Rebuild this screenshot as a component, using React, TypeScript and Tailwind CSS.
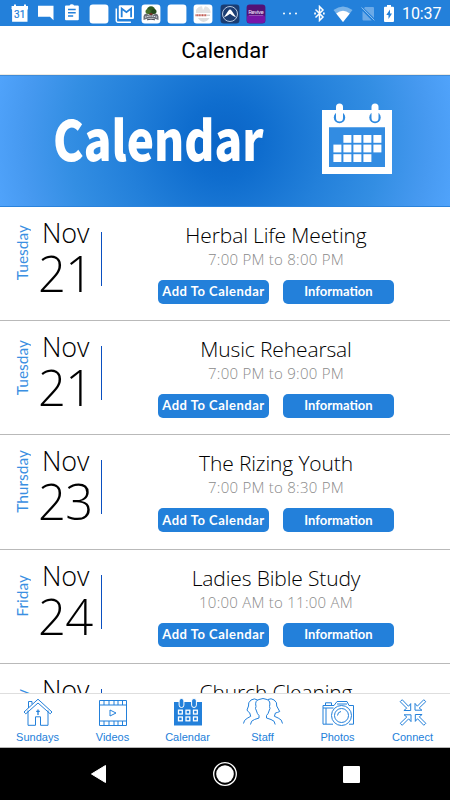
import type { ReactNode } from "react";

const BLUE = "#2380da";

const events = [
  { day: "Tuesday", month: "Nov", date: "21", title: "Herbal Life Meeting", time: "7:00 PM to 8:00 PM" },
  { day: "Tuesday", month: "Nov", date: "21", title: "Music Rehearsal", time: "7:00 PM to 9:00 PM" },
  { day: "Thursday", month: "Nov", date: "23", title: "The Rizing Youth", time: "7:00 PM to 8:30 PM" },
  { day: "Friday", month: "Nov", date: "24", title: "Ladies Bible Study", time: "10:00 AM to 11:00 AM" },
  { day: "Friday", month: "Nov", date: "24", title: "Church Cleaning", time: "" },
];

function StatusIcon({ children }: { children?: ReactNode }) {
  return (
    <svg className="w-5 h-5 shrink-0" viewBox="0 0 20 20" fill="none">
      {children}
    </svg>
  );
}

function Tile({ fill = "#fff", children }: { fill?: string; children?: ReactNode }) {
  return (
    <StatusIcon>
      <rect x="0.6" y="0.6" width="18.8" height="18.8" rx="3.2" fill={fill} />
      {children}
    </StatusIcon>
  );
}

function StatusBar() {
  return (
    <div className="h-[26px] shrink-0 bg-[#2380da] flex items-center pl-[10px] pr-[8px] pb-px">
      <div className="flex gap-[6.2px] pt-[2px]">
        <StatusIcon>
          <path d="M2 2h2V0.6h2V2h8V0.6h2V2h2v3H1.6V2z" fill="#fff" />
          <path d="M1.400 4.500h16.800l-.7 1.500v11.800h-15.400V6z" fill="#fff" />
          <text x="9.700" y="14" textAnchor="middle" fontSize="10" stroke={BLUE} strokeWidth=".2" fill={BLUE} className="font-[Roboto]">31</text>
        </StatusIcon>
        <StatusIcon>
          <path d="M2 1.700h15.500v14.500l-3.500-3.500H2z" fill="#fff" />
        </StatusIcon>
        <StatusIcon>
          <path d="M4 1.500h3.500a2.500 2 0 0 1 4.600 0h3.700q1 0 1 1v12.700q0 1-1 1H4q-1 0-1-1V2.500q0-1 1-1z" fill="#fff" />
          <path d="M6 5.500h7.700M6 8.700h7.700M6 11.900h5.200" stroke={BLUE} strokeWidth="1.500" />
        </StatusIcon>
        <Tile />
        <StatusIcon>
          <path d="M1.300 4.500v12.300q0 1.400 1.400 1.400h13.200" stroke="#fff" strokeWidth="1.500" />
          <rect x="3.800" y="1.200" width="15.200" height="13.800" rx="1.300" fill="#fff" />
          <path d="M6.700 13.300V4.500L11.400 8.200 16.100 4.500v8.800" stroke={BLUE} strokeWidth="1.800" />
        </StatusIcon>
        <Tile>
          <circle cx="10" cy="6.500" r="4.200" fill="#315b22" />
          <circle cx="7" cy="7.500" r="2.500" fill="#46702c" />
          <circle cx="13" cy="7.500" r="2.500" fill="#24491c" />
          <path d="M8.500 9h3v3h-3z" fill="#6b3429" />
          <path d="M2.500 12.500Q3 9 6 10l4 1.500 4-1.500q3-1 3.500 2.500v3.500l-3-1q-4.500-1.500-9 0l-3 1z" fill="#6b7079" />
          <path d="M4 13.200q6-2.400 12 0" stroke="#dfe3ea" strokeWidth="1.100" strokeDasharray="1.500 .7" />
          <path d="M6 15.800q4-1.200 8 0" stroke="#3f4550" strokeWidth="1" />
        </Tile>
        <Tile />
        <Tile>
          <path d="M3 6Q5 2.500 9 2.200l1 4 2-4Q16 3 17.500 7v2H3z" fill="#e3e3e3" />
          <path d="M5 14h11.500q-2 3.500-6 4-3.500-.5-5.500-4z" fill="#dcdcdc" />
          <path d="M2.500 11.200h11" stroke="#c0584f" strokeWidth="2" strokeDasharray="1.200 .4" />
          <path d="M13.500 11.200h3.500" stroke="#bbb" strokeWidth="1" />
        </Tile>
        <Tile fill="#1b3d72">
          <circle cx="10" cy="10" r="7.500" stroke="#b9c9df" strokeWidth="1" />
          <path d="M3.800 13.500 8.500 6.500l1.500-1.300 1.500 1.300 4.700 7-3.400-1.800L10 9.800l-2.800 1.900z" fill="#fff" />
        </Tile>
        <Tile fill="#521276">
          <rect x="1" y="11" width="18" height="8" rx="2" fill="#7815a8" />
          <text x="10" y="10.300" textAnchor="middle" fontSize="6" fill="#f3e5fa" textLength="15.500" className="font-[Roboto]">Revive</text>
          <path d="M3 11.500h14" stroke="#a277bb" strokeWidth=".6" />
        </Tile>
      </div>
      <svg className="w-4 h-1 ml-[16px]" viewBox="0 0 16 4" fill="#fff">
        <circle cx="2" cy="2.400" r="1" />
        <circle cx="8" cy="2.400" r="1" />
        <circle cx="14" cy="2.400" r="1" />
      </svg>
      <div className="flex items-center ml-auto pt-[2px]">
        <svg className="w-[11px] h-[17px] mr-[8px]" viewBox="0 0 11 17" fill="none" stroke="#fff" strokeWidth="1.500">
          <path d="M1.500 4.500 9 12l-3.500 3.500v-14L9 5 1.500 12.500" />
          <path d="M0.200 8.500h1.700M9 8.500h1.700" strokeWidth="1.800" />
        </svg>
        <svg className="w-5 h-4 mr-[8px]" viewBox="0 0 20 16">
          <path d="M0.500 4Q10-3 19.500 4L10 16z" fill="#79b3e9" />
          <path d="M3.200 7.400Q10 2.300 16.800 7.400L10 16z" fill="#fff" />
        </svg>
        <svg className="w-[14px] h-[15px] mr-[9px]" viewBox="0 0 14 15">
          <path d="M4 1h8q1 0 1 1v10L3 2.200zM1.500 5 10.800 14.500H2.500q-1 0-1-1z" fill="#6caae7" />
          <path d="M.6 1.500 13.400 14.400" stroke="#8fc0ee" strokeWidth="1" />
        </svg>
        <svg className="w-[10px] h-[17px] mr-[8px]" viewBox="0 0 10 17">
          <path d="M3 0h4v1.800h2q1 0 1 1V16q0 1-1 1H1q-1 0-1-1V2.800q0-1 1-1h2z" fill="#fff" />
          <path d="M6 4.500 2.300 10h2.200v4L8 8.500H6z" fill={BLUE} />
        </svg>
        <span className="font-[Roboto] text-[16px] leading-5 tracking-[-0.1px] text-white w-[40px] pt-px">10:37</span>
      </div>
    </div>
  );
}

function Banner() {
  const cells = [
    [1, 2, 3, 4],
    [0, 1, 2, 3, 4],
    [0, 1, 2, 3],
  ];
  return (
    <div className="h-[132px] shrink-0 flex items-center border-t border-b border-t-[#3f8bd8] border-b-[#2a83dd] bg-[radial-gradient(circle_240px_at_50%_50%,#0a64c6_0%,#0f6dce_16%,#2380da_42%,#338ee3_65%,#4699f0_84%,#52a5fd_100%)]">
      <h2 className="ml-[53px] w-[213px] pb-[9px] origin-left scale-x-[0.835] whitespace-nowrap text-white font-black text-[55px] leading-[60px] font-['Noto_Sans_CJK_SC','Open_Sans',sans-serif]">
        Calendar
      </h2>
      <svg className="w-[72px] h-[72px] ml-[55px] mb-[7px]" viewBox="0 0 72 72">
        <path d="M1 8h70v64H1z" fill="#fff" />
        <path d="M8 25.300h56v39.700H8z" fill="#328ce2" />
        {[18.5, 54].map((x) => (
          <g key={x}>
            <circle cx={x} cy="15.500" r="5.700" fill="#2e8ae0" />
            <rect x={x - 3.5} y="1.500" width="7" height="18" rx="3.500" fill="#fff" />
          </g>
        ))}
        {cells.map((row, r) =>
          row.map((c) => <rect key={`${r}-${c}`} x={12.4 + c * 10} y={33 + r * 9.6} width="8" height="7.800" fill="#fff" />)
        )}
      </svg>
    </div>
  );
}

function EventRow({ event }: { event: (typeof events)[number] }) {
  return (
    <div className="h-[114.2px] shrink-0 flex border-b border-[#b9b9b9]">
      <div className="w-[23px] ml-[11px] h-[92px] flex items-center justify-center">
        <span className="[writing-mode:vertical-rl] rotate-180 text-[15.5px] leading-[23px] text-[#3a8fe2] font-[Lato]">
          {event.day}
        </span>
      </div>
      <div className="w-[62px] ml-[5px] pt-[8px] font-light text-black font-['Open_Sans']">
        <div className="text-[27px] leading-[36px] pl-[3px] tracking-[-0.1px]">{event.month}</div>
        <div className="text-[49px] leading-[44px] -ml-px tracking-[-0.6px]">{event.date}</div>
      </div>
      <div className="w-px h-[54px] mt-[25px] bg-[#0a4fc0]" />
      <div className="w-[348px] pl-[56px] pr-[56px] pt-[13px] text-center">
        <h3 className="text-[21px] leading-[30px] tracking-[-0.13px] font-light text-black font-['Open_Sans'] whitespace-nowrap">{event.title}</h3>
        <p className="h-[18px] text-[15px] leading-[18px] tracking-[0.25px] font-light text-[#8a8a8a] font-['Open_Sans'] whitespace-nowrap">{event.time}</p>
        <div className="flex gap-[14px] mt-[12px]">
          <button className="w-[111px] h-[24px] shrink-0 rounded-[5px] bg-[#2380da] text-white font-bold text-[13px] tracking-[0.5px] font-[Lato] whitespace-nowrap">Add To Calendar</button>
          <button className="w-[111px] h-[24px] shrink-0 rounded-[5px] bg-[#2380da] text-white font-bold text-[13px] font-[Lato]">Information</button>
        </div>
      </div>
    </div>
  );
}

const tabs: { label: string; icon: ReactNode }[] = [
  {
    label: "Sundays",
    icon: (
      <>
        <path d="M7 12.500v14.800h7.500v-8.500h5v8.500h7.500V12.500" />
        <path d="M3 14 17 1.200 31 14l-1.800 1.800L17 5 4.800 15.800z" />
        <path d="M7.500 10V3.500h3.500v2.800" />
        <path d="M17 11.500v5.500M15.200 13.300h3.600" strokeWidth="1.300" />
      </>
    ),
  },
  {
    label: "Videos",
    icon: (
      <>
        <path d="M3.500 2.500h27v25h-27zM3.500 7h27M3.500 23h27M8 2.500V7M13 2.500V7M18 2.500V7M22 2.500V7M26.500 2.500V7M8 23v4.500M13 23v4.500M18 23v4.500M22 23v4.500M26.500 23v4.500" />
        <path d="M14 12v6l6-3z" />
      </>
    ),
  },
  {
    label: "Calendar",
    icon: (
      <>
        <path d="M3 4h28v23.500H3z" fill={BLUE} stroke="none" />
        {[10.5, 23].map((x) => (
          <rect key={x} x={x - 2.4} y=".5" width="4.800" height="9" rx="2.400" fill={BLUE} stroke="#fff" />
        ))}
        {[12.2, 19].map((y) =>
          [7.5, 15, 22.5].map((x) => <rect key={`${x}-${y}`} x={x} y={y} width="3.800" height="3.800" stroke="#fff" strokeWidth="1.300" />)
        )}
      </>
    ),
  },
  {
    label: "Staff",
    icon: (
      <>
        <path d="M23.500 8.500q1.300 1.500-.5 4.500-.7 3-2.500 4.500v2.500l4.500 1.500q4 1 4.200 5" />
        <path d="M10 8.500q-1.300 1.500.5 4.500.7 3 2.500 4.500v2.500l-4.500 1.500Q4.700 22.500 4.500 26.500" />
        <path d="M10 8.500Q8.500 2.500 13 1.500q4-2 8 0 4 1.500 2.500 7" />
        <path d="M11.500 2Q8.500-.2 5 2 1.800 4.500 2.500 8L1 12q1 2 2.700 2.800l1 3.500-3.500 2Q-2.200 22-2.500 25.500" />
        <path d="M22 1.500q3-1.700 6.200.5Q31.500 4.500 30.700 8l3 5.500q-2 1-4.300 1.500l-1 3.300 3.800 1.700q4 1.500 4.300 5.500" />
      </>
    ),
  },
  {
    label: "Photos",
    icon: (
      <>
        <path d="M12 26.200H2V7.500h11l3-4h10l2 4h4.500v18.700H28M4.500 7.500V4.800h6v2.700M2 10h10.500M5 10v16M16 6h10" />
        <circle cx="20.500" cy="17.500" r="10" fill="#fff" />
        <circle cx="20.500" cy="17.500" r="7" />
        <path d="M16.500 17.500q.2-3.500 3.500-4" />
      </>
    ),
  },
  {
    label: "Connect",
    icon: (
      <>
        {[0, 90, 180, 270].map((a) => (
          <path key={a} transform={`rotate(${a} 17 14.500)`} d="M6.200 1.700 4.200 3.700l6.500 6.500-2.800 2.300h6.800V5.600L12.500 8.300z" />
        ))}
      </>
    ),
  },
];

function TabBar() {
  return (
    <nav className="h-[55px] shrink-0 flex bg-white border-t border-t-[#dedede] border-b border-b-[#b5b5b5]">
      {tabs.map((tab) => (
        <div key={tab.label} className="flex-1 flex flex-col items-center pt-[4px]">
          <svg className="w-[34px] h-[30px] overflow-visible" viewBox="0 0 34 30" fill="none" stroke={BLUE} strokeWidth="1">
            {tab.icon}
          </svg>
          <span className="mt-[2px] text-[11px] leading-[14px] text-[#2380da] font-['Liberation_Sans']">{tab.label}</span>
        </div>
      ))}
    </nav>
  );
}

function NavigationBar() {
  return (
    <div className="h-[52px] shrink-0 bg-black flex items-center justify-between pl-[90px] pr-[90px]">
      <svg className="w-[18px] h-[20px]" viewBox="0 0 18 20">
        <path d="M1.500 10 15.500 1.500v17z" fill="#fff" stroke="#fff" strokeLinejoin="round" />
      </svg>
      <svg className="w-[26px] h-[26px] -ml-[1px]" viewBox="0 0 26 26">
        <circle cx="13" cy="13" r="11.300" fill="none" stroke="#fff" strokeWidth="1.300" />
        <circle cx="13" cy="13" r="8.800" fill="#fff" />
      </svg>
      <div className="w-[17px] h-[17px] bg-white rounded-[1px]" />
    </div>
  );
}

export default function App() {
  return (
    <div className="w-full h-screen flex flex-col bg-white overflow-hidden">
      <StatusBar />
      <header className="h-[49px] shrink-0 flex items-center justify-center border-b border-[#edeae2]">
        <h1 className="text-[22px] leading-7 text-black font-[Roboto] pt-[2px]">Calendar</h1>
      </header>
      <Banner />
      <main className="flex-1 min-h-0 flex flex-col overflow-hidden">
        {events.map((event, i) => (
          <EventRow key={i} event={event} />
        ))}
      </main>
      <TabBar />
      <NavigationBar />
    </div>
  );
}
